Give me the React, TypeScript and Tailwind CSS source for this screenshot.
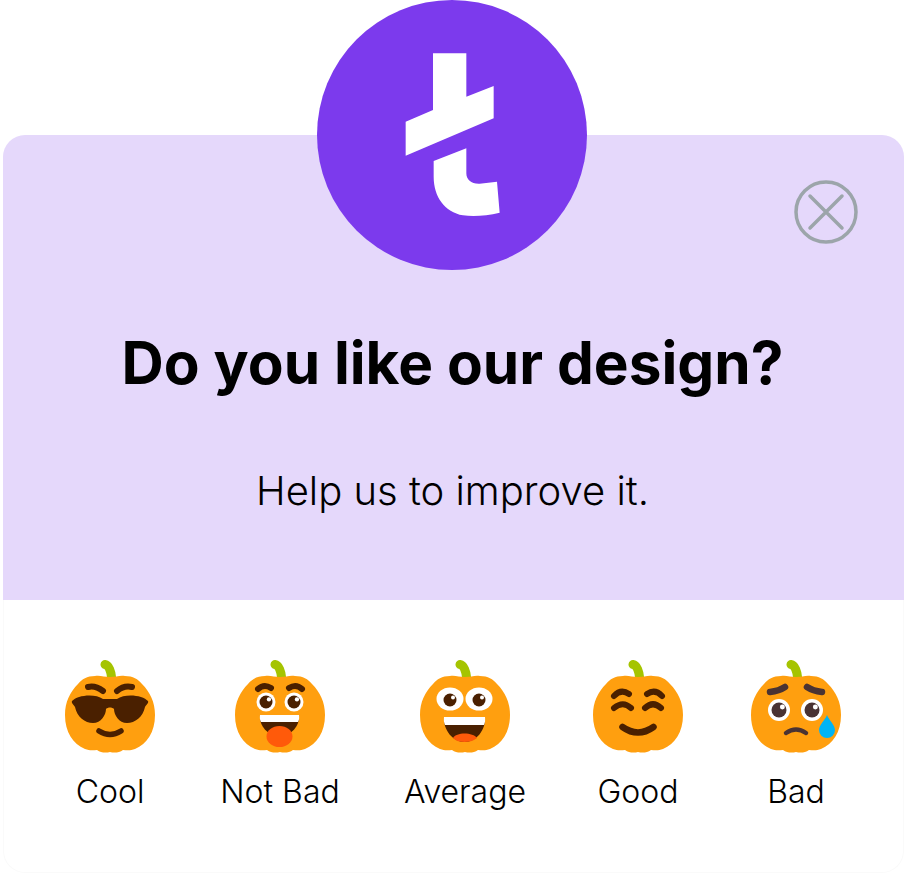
const BROWN = "#4a2000";

function Pumpkin({ children }: { children: React.ReactNode }) {
  return (
    <svg width="90" height="93" viewBox="0 0 90 93" fill="none" strokeLinecap="round" strokeLinejoin="round">
      <path d="M40 4.500 C44 5 46 12 46.500 17" stroke="#a5c400" strokeWidth="9" />
      <path
        d="M45 17 C39 17 35 15 30 16 C22 16 17 19 13 24 C5 32 0 42 0 55 C0 72 8 84 20 89 C25 91 29 90 32 90 C36 93 41 93 45 92 C49 93 54 93 58 90 C61 90 65 91 70 89 C82 84 90 72 90 55 C90 42 85 32 77 24 C73 19 68 16 60 16 C55 15 51 17 45 17 Z"
        fill="#ff9f0f"
      />
      {children}
    </svg>
  );
}

function Eye({ x, y, r, pupil, color = BROWN }: { x: number; y: number; r: number; pupil: number; color?: string }) {
  return (
    <>
      <circle cx={x} cy={y} r={r} fill="#fff" />
      <circle cx={x} cy={y} r={pupil} fill={color} />
      <circle cx={x + pupil * 0.45} cy={y - pupil * 0.4} r={pupil * 0.33} fill="#fff" />
    </>
  );
}

function CoolFace() {
  return (
    <Pumpkin>
      <path d="M23 27 Q30 25 38 31 M52 31 Q59 25 67 27" stroke={BROWN} strokeWidth="6" />
      <path
        d="M7 41 C12 35 30 33 38 39 L52 39 C60 33 78 35 83 41 C84 43 81 45 80 47 C78 57 70 63 62 63 C54 63 49 55 49 49 C47 47 43 47 41 49 C41 55 36 63 28 63 C20 63 12 57 10 47 C9 45 6 43 7 41 Z"
        fill={BROWN}
      />
      <path d="M34 71 Q45 78 56 71" stroke={BROWN} strokeWidth="5.500" />
    </Pumpkin>
  );
}

function NotBadFace() {
  return (
    <Pumpkin>
      <path d="M23 29 Q29 23.500 36 28 M54 28 Q61 23.500 67 29" stroke={BROWN} strokeWidth="6" />
      <Eye x={31} y={42} r={9.500} pupil={6.500} />
      <Eye x={59} y={42} r={9.500} pupil={6.500} />
      <path d="M25 55 H64 C65 66 56 76 44.500 76 C33 76 24 66 25 55 Z" fill={BROWN} />
      <path d="M25 55 H64 C64.500 58 64 60 63 62 H26 C25 60 24.500 58 25 55 Z" fill="#fff" />
      <ellipse cx="44.500" cy="76.500" rx="13" ry="10.500" fill="#ff5a0a" />
    </Pumpkin>
  );
}

function AverageFace() {
  return (
    <Pumpkin>
      <ellipse cx="30" cy="39" rx="13.500" ry="11.500" fill="#fff" />
      <ellipse cx="59" cy="39" rx="13.500" ry="11.500" fill="#fff" />
      <circle cx="30" cy="40" r="6.500" fill={BROWN} />
      <circle cx="33" cy="37.500" r="2" fill="#fff" />
      <circle cx="59" cy="40" r="6.500" fill={BROWN} />
      <circle cx="62" cy="37.500" r="2" fill="#fff" />
      <path d="M24 57 H65 C66 70 56 82 44.500 82 C33 82 23 70 24 57 Z" fill={BROWN} />
      <path d="M24 57 H65 C65.500 60 65 63 64 65 H25 C24 63 23.500 60 24 57 Z" fill="#fff" />
      <path d="M33 78 C36 72 53 72 57 78 C53 81 49 82 44.500 82 C40 82 36 81 33 78 Z" fill="#ff5a0a" />
    </Pumpkin>
  );
}

function GoodFace() {
  return (
    <Pumpkin>
      <path d="M21 36 Q28 28.500 36 34 M54 34 Q62 28.500 69 36" stroke={BROWN} strokeWidth="6" />
      <path d="M21 48 Q30 40.500 38 48 M52 48 Q60 40.500 68 48" stroke={BROWN} strokeWidth="6" />
      <path d="M29.500 67 Q45 78 60.500 67" stroke={BROWN} strokeWidth="6.500" />
    </Pumpkin>
  );
}

function BadFace() {
  const dark = "#4a3333";
  return (
    <Pumpkin>
      <path d="M19 32 Q28 31 34 27 M56 27 Q62 31 71 32" stroke={dark} strokeWidth="6.500" />
      <Eye x={28} y={50} r={11} pupil={7.500} color={dark} />
      <Eye x={61} y={50} r={11} pupil={7.500} color={dark} />
      <path d="M35 73 Q45 66 55 73" stroke={dark} strokeWidth="4.500" />
      <path d="M76 55 C78 60 84 65 84 70 A8 8 0 0 1 68 70 C68 65 74 60 76 55 Z" fill="#00b4f5" />
    </Pumpkin>
  );
}

const options = [
  { label: "Cool", face: <CoolFace />, margin: "ml-[41px]" },
  { label: "Not Bad", face: <NotBadFace />, margin: "ml-[40px]" },
  { label: "Average", face: <AverageFace />, margin: "ml-[55px]" },
  { label: "Good", face: <GoodFace />, margin: "ml-[43px]" },
  { label: "Bad", face: <BadFace />, margin: "ml-[28px]" },
];

export default function App() {
  return (
    <main className="relative h-[877px] w-[904px] overflow-hidden bg-white pt-[135px] pl-[3px] font-['Inter',sans-serif] text-black">
      <section className="relative flex h-[465px] flex-col items-center rounded-t-[22px] bg-[#e5d8fb] pt-[190px]">
        <button className="absolute right-[46px] top-[45px]">
          <svg width="64" height="64" viewBox="0 0 64 64" fill="none" stroke="#9ca5aa" strokeWidth="3.500" strokeLinecap="round" className="block">
            <circle cx="32" cy="32" r="30" />
            <path d="M16 16 L48 48 M48 16 L16 48" />
          </svg>
        </button>
        <h1 className="-ml-[2px] text-[58.500px] font-bold leading-[76px]">Do you like our design?</h1>
        <p className="-ml-[2px] mt-[62px] text-[40px] font-light leading-[56px]">Help us to improve it.</p>
      </section>

      <section className="flex h-[273px] rounded-b-[22px] border border-t-0 border-[#fafafa] pt-[60px]">
        {options.map((o) => (
          <div key={o.label} className={`flex w-[130px] shrink-0 flex-col items-center ${o.margin}`}>
            {o.face}
            <span className="mt-[17px] text-[32px] font-light leading-[44px]">{o.label}</span>
          </div>
        ))}
      </section>

      {/* logo sits half over the card */}
      <div className="absolute left-[317px] top-0 h-[270px] w-[270px] rounded-full bg-[#7c3aed]">
        <svg width="270" height="270" viewBox="52 0 810 810" fill="#fff">
          <path d="M400 160 H500 V290 L582 258 V355 L318 467 V365 L400 330 Z" />
          <path d="M402 483 L500 445 V520 C500 540 515 552 540 551 L592 545 L600 638 C560 648 520 650 490 646 C435 636 402 590 402 530 Z" />
        </svg>
      </div>
    </main>
  );
}
